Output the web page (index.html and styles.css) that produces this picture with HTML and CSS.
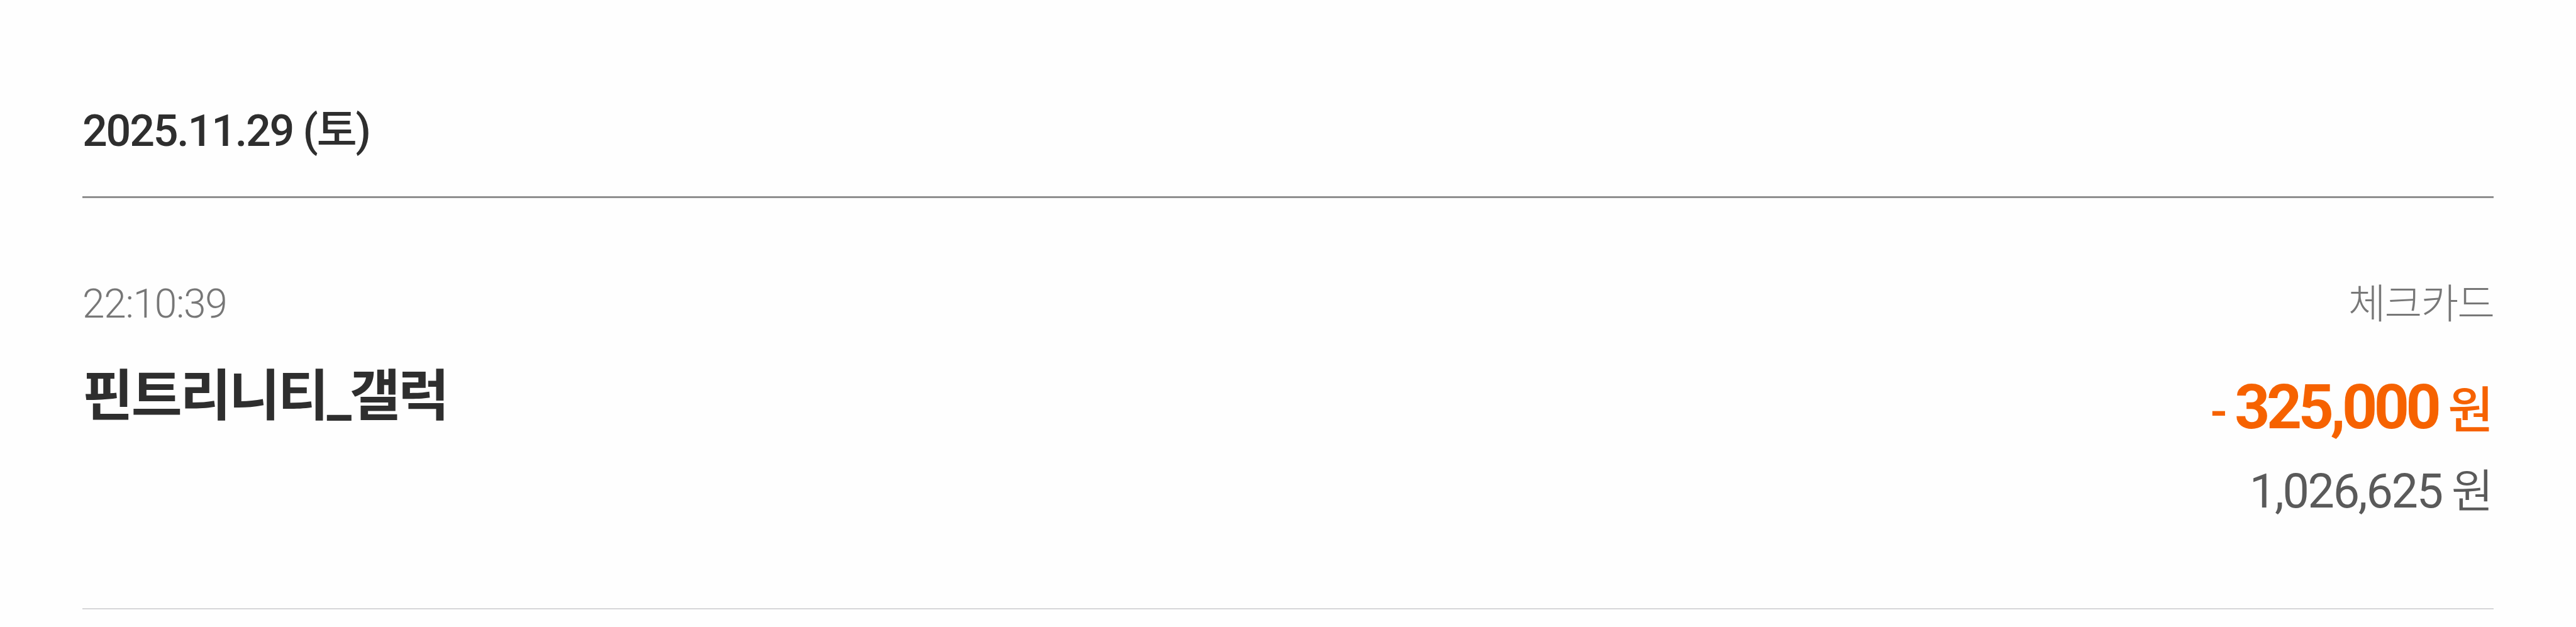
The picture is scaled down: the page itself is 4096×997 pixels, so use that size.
FILE: index.html
```html
<!DOCTYPE html>
<html lang="ko">
<head>
  <meta charset="UTF-8">
  <meta name="viewport" content="width=device-width, initial-scale=1.0">
  <title>거래내역</title>
  <link rel="stylesheet" href="styles.css">
</head>
<body>
  <main class="history">
    <h2 class="date">2025.11.29 (토)</h2>
    <div class="transaction">
      <div class="info">
        <span class="time">22:10:39</span>
        <strong class="name">핀트리니티_갤럭</strong>
      </div>
      <div class="amounts">
        <span class="method">체크카드</span>
        <span class="amount"><span class="minus">-</span><span class="number">325,000</span><span class="unit">원</span></span>
        <span class="balance"><span class="balance-number">1,026,625</span><span class="balance-unit">원</span></span>
      </div>
    </div>
  </main>
</body>
</html>
```
FILE: styles.css
```css
* {
  box-sizing: border-box;
}
body {
  margin: 0;
  background: #fefefe;
  color: #2e2e2e;
  font-family: Roboto, 'Noto Sans CJK KR', sans-serif;
  overflow: hidden;
}
.history {
  height: 997px;
  padding: 0 131px;
}
.date {
  height: 315px;
  margin: 0;
  padding-top: 156px;
  border-bottom: 3px solid #8e8e8e;
  font-size: 70px;
  font-weight: 500;
  line-height: 104px;
  letter-spacing: -2.2px;
}
.transaction {
  display: flex;
  justify-content: space-between;
  height: 654px;
  padding-top: 123px;
  border-bottom: 2px solid #d6d6d8;
}
.info,
.amounts {
  display: flex;
  flex-direction: column;
}
.amounts {
  align-items: flex-end;
}
.time,
.method {
  color: #777;
  font-size: 64px;
  font-weight: 350;
  line-height: 92px;
  letter-spacing: -1.3px;
}
.method {
  font-size: 65px;
  font-weight: 300;
  letter-spacing: -2px;
}
.name {
  margin-top: 38px;
  font-size: 88px;
  font-weight: 700;
  line-height: 124px;
  letter-spacing: -3.2px;
}
.amount {
  display: flex;
  align-items: baseline;
  margin-top: 48px;
  color: #f66200;
  font-weight: 700;
  line-height: 140px;
}
.minus {
  margin-right: 12px;
  font-size: 78px;
  font-weight: 500;
}
.number {
  font-size: 98px;
  letter-spacing: -5.5px;
}
.unit {
  margin-left: 16px;
  font-size: 79px;
  font-weight: 500;
}
.balance {
  display: flex;
  align-items: baseline;
  margin-top: -4px;
  color: #5a5a5a;
  font-size: 75.5px;
  line-height: 120px;
}
.balance-number {
  letter-spacing: -2.3px;
}
.balance-unit {
  margin-left: 15px;
  font-size: 73px;
  font-weight: 350;
}
```
